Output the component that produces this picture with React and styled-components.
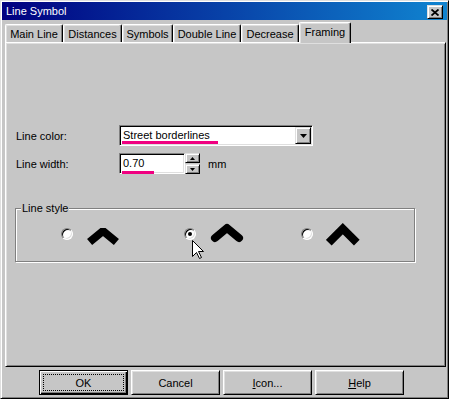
import React from "react";
import styled, { createGlobalStyle } from "styled-components";

const GRAY = "#c6c6c6";
const DARK = "#808080";
const LIGHT = "#dfdfdf";
const PINK = "#f00080";

const Global = createGlobalStyle`
  html, body { margin: 0; padding: 0; background: ${GRAY}; }
  body {
    font-family: "Liberation Sans", Arial, sans-serif;
    font-size: 11px;
    color: #000;
  }
`;

const Window = styled.div`
  width: 449px;
  height: 399px;
  box-sizing: border-box;
  border: 1px solid;
  border-color: ${LIGHT} #000 #000 ${LIGHT};
  box-shadow: inset 1px 1px 0 #fff, inset -1px -1px 0 ${DARK};
  padding: 1px;
  background: ${GRAY};
  display: flex;
  flex-direction: column;
  overflow: hidden;
`;

const TitleBar = styled.div`
  flex: none;
  height: 18px;
  display: flex;
  align-items: center;
  justify-content: space-between;
  padding: 0 4px 0 4px;
  background: linear-gradient(to right, #000080, #1084d0);
  color: #fff;
  font-size: 11px;
`;

const TitleText = styled.span`
  line-height: 18px;
`;

const Raised = styled.div`
  box-sizing: border-box;
  background: ${GRAY};
  border: 1px solid;
  border-color: ${LIGHT} #000 #000 ${LIGHT};
  box-shadow: inset 1px 1px 0 #fff, inset -1px -1px 0 ${DARK};
  display: flex;
  align-items: center;
  justify-content: center;
`;

const CloseBox = styled(Raised)`
  width: 16px;
  height: 14px;
  margin-top: 2px;
`;

const TabRow = styled.div`
  flex: none;
  margin-top: 2px;
  height: 20px;
  display: flex;
  align-items: flex-end;
  padding-left: 3px;
`;

const Tab = styled.div`
  box-sizing: border-box;
  width: ${(p) => p.$w}px;
  height: ${(p) => (p.$active ? 21 : 18)}px;
  margin-bottom: ${(p) => (p.$active ? -1 : 0)}px;
  position: relative;
  z-index: ${(p) => (p.$active ? 1 : 0)};
  background: ${GRAY};
  border-top: 1px solid #fff;
  border-left: 1px solid #fff;
  border-right: 1px solid #000;
  border-radius: 2px 2px 0 0;
  box-shadow: inset -1px 0 0 ${DARK}, inset 1px 1px 0 ${LIGHT};
  display: flex;
  align-items: center;
  justify-content: center;
  white-space: nowrap;
  padding-bottom: ${(p) => (p.$active ? 2 : 0)}px;
`;

const Panel = styled.div`
  flex: none;
  box-sizing: border-box;
  height: 325px;
  margin: 0 1px 0 3px;
  border: 1px solid;
  border-color: #fff #000 #000 #fff;
  box-shadow: inset 1px 1px 0 ${LIGHT}, inset -1px -1px 0 ${DARK};
  padding: 82px 0 0 10px;
  display: flex;
  flex-direction: column;
  align-items: flex-start;
`;

const Form = styled.div`
  display: grid;
  grid-template-columns: 103px auto;
  row-gap: 7px;
  align-items: center;
`;

const Label = styled.span`
  white-space: nowrap;
`;

const Control = styled.div`
  display: flex;
  align-items: center;
`;

const Sunken = styled.div`
  box-sizing: border-box;
  width: ${(p) => p.$w}px;
  height: 21px;
  border: 1px solid;
  border-color: ${DARK} #fff #fff ${DARK};
  box-shadow: inset 1px 1px 0 #000, inset -1px -1px 0 ${LIGHT};
  background: #fff;
  padding: 1px 1px 1px 3px;
  display: flex;
  align-items: center;
  justify-content: space-between;
`;

const Marked = styled.span`
  display: inline-block;
  line-height: 11px;
  margin-left: -1px;
  padding: 0 ${(p) => p.$extra}px ${(p) => p.$gap}px 1px;
  border-bottom: 3px solid ${PINK};
  margin-top: ${(p) => p.$gap + 3}px;
  white-space: nowrap;
`;

const DropButton = styled(Raised)`
  width: 16px;
  height: 17px;
`;

const Spin = styled.div`
  display: flex;
  flex-direction: column;
  gap: 1px;
  width: 15px;
`;

const SpinButton = styled(Raised)`
  height: 10px;
`;

const Unit = styled.span`
  margin-left: 8px;
`;

const GroupBox = styled.div`
  position: relative;
  box-sizing: border-box;
  margin: 34px 0 0 -1px;
  width: 400px;
  height: 54px;
  border: 1px solid ${DARK};
  box-shadow: inset 1px 1px 0 #fff, 1px 1px 0 #fff;
  display: flex;
  flex-direction: column;
  align-items: flex-start;
`;

const GroupLabel = styled.span`
  margin: -7px 0 0 5px;
  padding: 0 1px;
  height: 13px;
  line-height: 13px;
  background: ${GRAY};
`;

const OptionRow = styled.div`
  align-self: stretch;
  margin-top: 5px;
  padding-left: 45px;
  display: grid;
  grid-template-columns: 123px 117px auto;
`;

const Option = styled.div`
  display: flex;
  align-items: flex-start;
`;

const Radio = styled.div`
  box-sizing: border-box;
  width: 12px;
  height: 12px;
  margin-top: 8px;
  border-radius: 50%;
  background: #fff;
  border: 1px solid;
  border-color: ${DARK} #fff #fff ${DARK};
  box-shadow: inset 1px 1px 0 #000, inset -1px -1px 0 ${LIGHT};
  display: flex;
  align-items: center;
  justify-content: center;
`;

const Dot = styled.div`
  width: 4px;
  height: 4px;
  border-radius: 50%;
  background: #000;
`;

const ChevronSvg = styled.svg`
  display: block;
  margin-left: 13px;
`;

const Cursor = styled.svg`
  position: absolute;
  left: 176px;
  top: 31px;
`;

const ButtonRow = styled.div`
  flex: none;
  margin-top: 3px;
  padding-left: 37px;
  display: flex;
  gap: 3px;
`;

const Button = styled.div`
  box-sizing: border-box;
  width: 89px;
  height: 25px;
  background: ${GRAY};
  border: 1px solid;
  border-color: ${(p) => (p.$default ? "#000" : "#fff #000 #000 #fff")};
  box-shadow: ${(p) =>
    p.$default
      ? `inset 1px 1px 0 #fff, inset -1px -1px 0 #000, inset -2px -2px 0 ${DARK}`
      : `inset 1px 1px 0 ${LIGHT}, inset -1px -1px 0 ${DARK}`};
  display: flex;
  align-items: center;
  justify-content: center;
  padding: 3px;
`;

const Focus = styled.div`
  box-sizing: border-box;
  width: 100%;
  height: 100%;
  border: 1px dotted #000;
  display: flex;
  align-items: center;
  justify-content: center;
`;

const tabs = [
  ["Main Line", 58],
  ["Distances", 59],
  ["Symbols", 51],
  ["Double Line", 68],
  ["Decrease", 58],
  ["Framing", 52, true],
];

const options = [
  { points: "3.6,22 17,11 30.4,22", join: "bevel", cap: "butt" },
  { points: "6,18 18,8 30,18", join: "round", cap: "round", checked: true },
  { points: "2.8,22.7 16.8,8.7 30.8,22.7", join: "miter", cap: "butt" },
];

const DownTri = ({ w = 7, h = 4 }) => (
  <svg width={w} height={h} viewBox={`0 0 ${w} ${h}`}>
    <polygon points={`0,0 ${w},0 ${w / 2},${h}`} fill="#000" />
  </svg>
);

const UpTri = ({ w = 5, h = 3 }) => (
  <svg width={w} height={h} viewBox={`0 0 ${w} ${h}`}>
    <polygon points={`0,${h} ${w},${h} ${w / 2},0`} fill="#000" />
  </svg>
);

export default function App() {
  return (
    <>
      <Global />
      <Window>
        <TitleBar>
          <TitleText>Line Symbol</TitleText>
          <CloseBox>
            <svg width="8" height="7" viewBox="0 0 8 7">
              <path d="M0.5 0.5 L7.5 6.5 M7.5 0.5 L0.5 6.5" stroke="#000" strokeWidth="1.8" />
            </svg>
          </CloseBox>
        </TitleBar>
        <TabRow>
          {tabs.map(([name, w, active]) => (
            <Tab key={name} $w={w} $active={active}>
              {name}
            </Tab>
          ))}
        </TabRow>
        <Panel>
          <Form>
            <Label>Line color:</Label>
            <Control>
              <Sunken $w={194}>
                <Marked $gap={0} $extra={8}>Street borderlines</Marked>
                <DropButton>
                  <DownTri />
                </DropButton>
              </Sunken>
            </Control>
            <Label>Line width:</Label>
            <Control>
              <Sunken $w={66}>
                <Marked $gap={2} $extra={10}>0.70</Marked>
              </Sunken>
              <Spin>
                <SpinButton>
                  <UpTri />
                </SpinButton>
                <SpinButton>
                  <DownTri w={5} h={3} />
                </SpinButton>
              </Spin>
              <Unit>mm</Unit>
            </Control>
          </Form>
          <GroupBox>
            <GroupLabel>Line style</GroupLabel>
            <OptionRow>
              {options.map((o, i) => (
                <Option key={i}>
                  <Radio>{o.checked && <Dot />}</Radio>
                  <ChevronSvg width="38" height="30" viewBox="0 0 38 30">
                    <polyline
                      points={o.points}
                      fill="none"
                      stroke="#000"
                      strokeWidth="8"
                      strokeLinejoin={o.join}
                      strokeLinecap={o.cap}
                      strokeMiterlimit="10"
                    />
                  </ChevronSvg>
                </Option>
              ))}
            </OptionRow>
            <Cursor width="13" height="20" viewBox="0 0 13 20">
              <polygon
                points="0.5,0.5 0.5,16.5 4.5,12.5 7.5,18.5 9.5,17.5 6.5,11.5 11.5,11.5"
                fill="#fff"
                stroke="#000"
                strokeWidth="1"
                strokeLinejoin="miter"
              />
            </Cursor>
          </GroupBox>
        </Panel>
        <ButtonRow>
          <Button $default>
            <Focus>OK</Focus>
          </Button>
          <Button>Cancel</Button>
          <Button>
            <span>
              <u>I</u>con...
            </span>
          </Button>
          <Button>
            <span>
              <u>H</u>elp
            </span>
          </Button>
        </ButtonRow>
      </Window>
    </>
  );
}
